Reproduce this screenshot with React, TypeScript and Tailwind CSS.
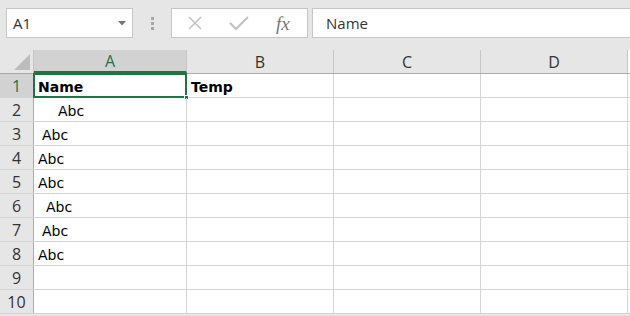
const cols = ["A", "B", "C", "D"];
const colW = ["w-[153px]", "w-[147px]", "w-[147px]", "w-[147px]"];

const rows: { a: string; pad: string; b?: string; bold?: boolean }[] = [
  { a: "Name", pad: "pl-[4px]", b: "Temp", bold: true },
  { a: "Abc", pad: "pl-[24px]" },
  { a: "Abc", pad: "pl-[8px]" },
  { a: "Abc", pad: "pl-[4px]" },
  { a: "Abc", pad: "pl-[4px]" },
  { a: "Abc", pad: "pl-[12px]" },
  { a: "Abc", pad: "pl-[8px]" },
  { a: "Abc", pad: "pl-[4px]" },
  { a: "", pad: "pl-[4px]" },
  { a: "", pad: "pl-[4px]" },
];

const uiFont = "font-['Open_Sans',sans-serif]";
const cellFont = "font-['DejaVu_Sans',sans-serif]";

const App = () => {
  return (
    <div className="w-[630px] h-[316px] overflow-hidden bg-[#e6e6e6]">
      {/* formula bar */}
      <div className={`h-[50px] flex items-start pt-[8px] pl-[6px] ${uiFont}`}>
        <div className="w-[127px] h-[30px] border border-[#c6c6c6] bg-white flex items-center justify-between pl-[6px] pr-[6px]">
          <span className="text-[15px] text-[#333]">A1</span>
          <svg width="8" height="5" viewBox="0 0 8 5">
            <path d="M0 0 L8 0 L4 4.5 Z" fill="#777" />
          </svg>
        </div>
        <div className="w-[38px] h-[30px] flex flex-col items-center justify-center gap-[2px]">
          <div className="w-[3px] h-[3px] bg-[#a6a6a6]" />
          <div className="w-[3px] h-[3px] bg-[#a6a6a6]" />
          <div className="w-[3px] h-[3px] bg-[#a6a6a6]" />
        </div>
        <div className="w-[137px] h-[30px] border border-[#c6c6c6] bg-white flex items-center">
          <svg width="16" height="16" viewBox="0 0 16 16" className="ml-[15px]">
            <path d="M2 2 L14 14 M14 2 L2 14" stroke="#c2c2c2" strokeWidth="1.6" />
          </svg>
          <svg width="20" height="16" viewBox="0 0 20 16" className="ml-[26px]">
            <path d="M1 8 L7 14 L19 2" stroke="#c2c2c2" strokeWidth="2.2" fill="none" />
          </svg>
          <span className="ml-[27px] font-['Liberation_Serif',serif] italic text-[19px] text-[#777] leading-none">
            fx
          </span>
        </div>
        <div className="ml-[4px] flex-1 h-[30px] border border-[#c6c6c6] border-r-0 bg-white flex items-center pl-[13px]">
          <span className="text-[15px] text-[#333]">Name</span>
        </div>
      </div>

      {/* grid */}
      <div className="bg-white flex flex-col">
        <div className={`flex h-[24px] bg-[#e6e6e6] border-b border-[#ababab] ${uiFont}`}>
          <div className="w-[34px] shrink-0 border-r border-[#c6c6c6] relative">
            <svg width="16" height="16" viewBox="0 0 16 16" className="absolute right-[3px] bottom-[3px]">
              <path d="M16 0 L16 16 L0 16 Z" fill="#bdbdbd" />
            </svg>
          </div>
          {cols.map((c, i) => (
            <div
              key={c}
              className={`${colW[i]} shrink-0 flex items-center justify-center text-[16px] border-r border-[#c6c6c6] ${
                i === 0 ? "bg-[#d2d2d2] text-[#217346] border-b-2 border-b-[#217346]" : "text-[#333]"
              }`}
            >
              {c}
            </div>
          ))}
          <div className="flex-1 bg-white" />
        </div>

        {rows.map((r, i) => (
          <div key={i} className="flex h-[24px] border-b border-[#d4d4d4]">
            <div
              className={`w-[34px] shrink-0 flex items-center justify-center text-[16px] border-r border-[#ababab] ${uiFont} ${
                i === 0 ? "bg-[#d2d2d2] text-[#217346]" : "bg-[#e6e6e6] text-[#333]"
              }`}
            >
              {i + 1}
            </div>
            <div
              className={`w-[153px] shrink-0 relative flex items-center pt-[4px] border-r border-[#d4d4d4] text-[14px] text-black ${cellFont} ${r.pad} ${
                r.bold ? "font-bold" : ""
              }`}
            >
              {r.a}
              {i === 0 && (
                <div className="absolute left-[-1px] top-[-1px] right-[-1px] bottom-[-1px] border-2 border-[#217346]">
                  <div className="absolute right-[-4px] bottom-[-4px] w-[5px] h-[5px] bg-[#217346] border border-white" />
                </div>
              )}
            </div>
            <div
              className={`w-[147px] shrink-0 flex items-center pt-[4px] pl-[4px] border-r border-[#d4d4d4] text-[14px] text-black ${cellFont} ${
                r.bold ? "font-bold" : ""
              }`}
            >
              {r.b ?? ""}
            </div>
            <div className="w-[147px] shrink-0 border-r border-[#d4d4d4]" />
            <div className="w-[147px] shrink-0 border-r border-[#d4d4d4]" />
            <div className="flex-1" />
          </div>
        ))}
      </div>
    </div>
  );
};

export default App;
